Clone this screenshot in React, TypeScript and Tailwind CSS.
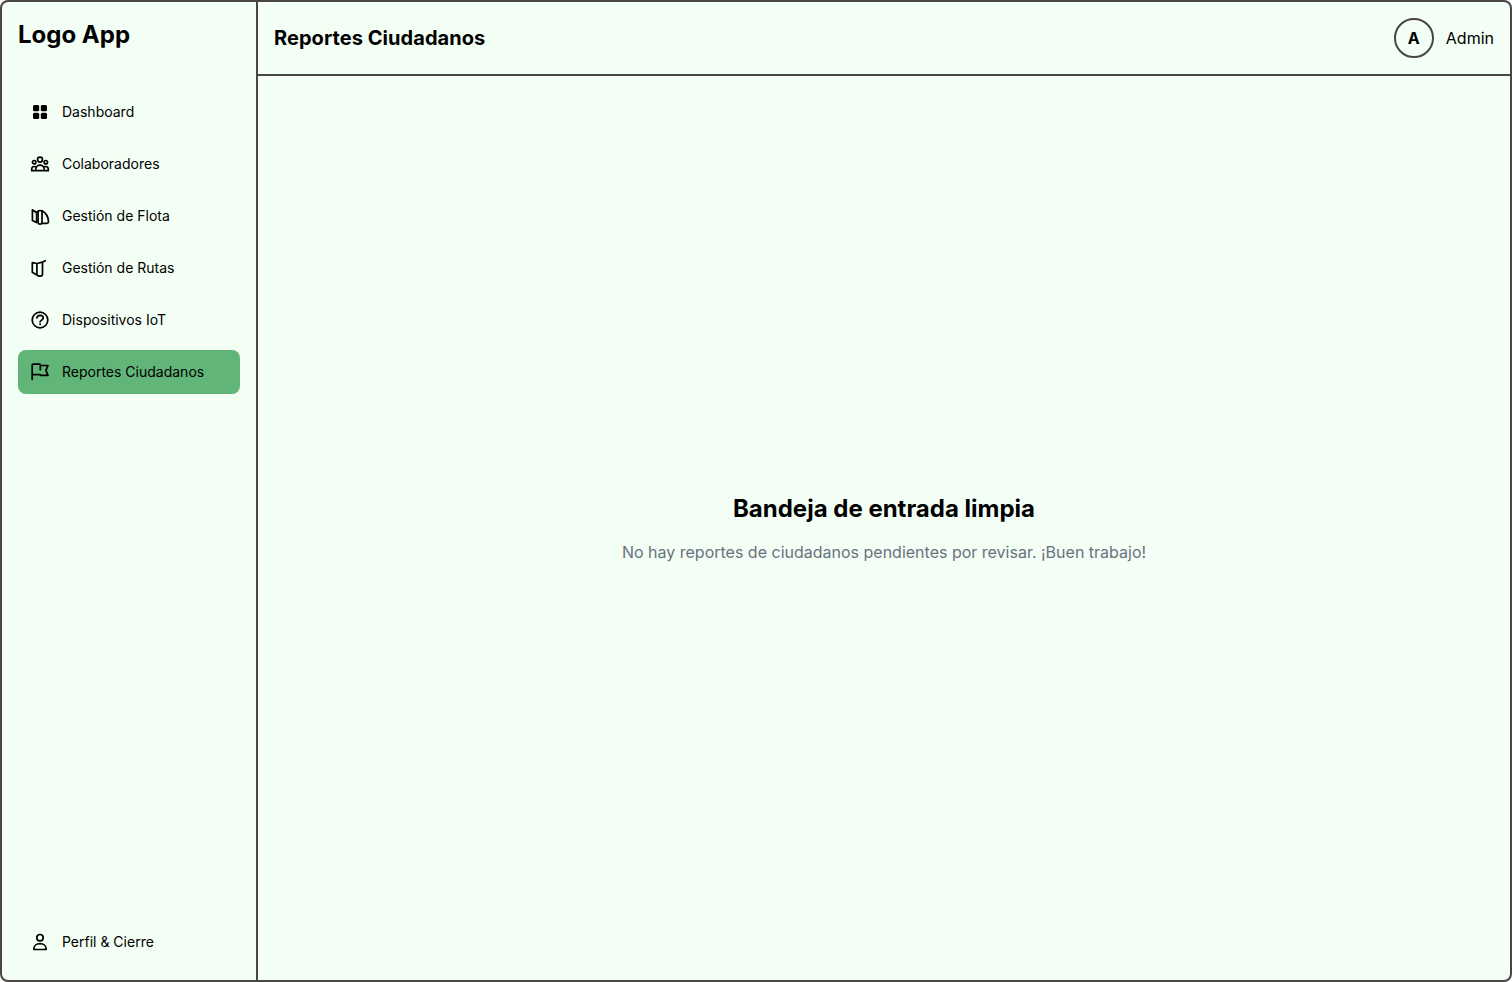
import React from "react";

type Item = { label: string; icon: React.ReactNode };

function Icon({ children }: { children: React.ReactNode }) {
  return (
    <svg
      width="20"
      height="20"
      viewBox="0 0 20 20"
      fill="none"
      stroke="#000"
      strokeWidth="1.7"
      strokeLinecap="round"
      strokeLinejoin="round"
      className="shrink-0"
    >
      {children}
    </svg>
  );
}

const items: Item[] = [
  {
    label: "Dashboard",
    icon: (
      <Icon>
        <g fill="#000" stroke="none">
          <rect x="3" y="3" width="6.200" height="6.200" rx="1.5" />
          <rect x="10.800" y="3" width="6.200" height="6.200" rx="1.5" />
          <rect x="3" y="10.800" width="6.200" height="6.200" rx="1.5" />
          <rect x="10.800" y="10.800" width="6.200" height="6.200" rx="1.5" />
        </g>
      </Icon>
    ),
  },
  {
    label: "Colaboradores",
    icon: (
      <Icon>
        <circle cx="10" cy="5.6" r="2.5" />
        <circle cx="4.2" cy="8.2" r="1.7" />
        <circle cx="15.8" cy="8.2" r="1.7" />
        <path d="M5.8 16.7v-1.400a4.2 4.2 0 0 1 8.400 0v1.400zM5.800 16.700H1.700v-1.500c0-1.600 1.100-2.700 2.500-2.700.9 0 1.500.3 2 .9M14.200 16.700h4.100v-1.500c0-1.600-1.100-2.700-2.500-2.700-.9 0-1.500.3-2 .9" />
      </Icon>
    ),
  },
  {
    label: "Gestión de Flota",
    icon: (
      <Icon>
        <path d="M2.400 3.800v10.700l4.200 2.100V6.800L2.400 3.800M6.600 6.600l2-1.800M12 4.700c3.200 1.700 6.200 5.900 6.500 10.700.1 1.200-.4 1.900-1.600 1.900H12" />
        <rect x="8.100" y="4.500" width="3.900" height="13.700" rx="1.600" />
      </Icon>
    ),
  },
  {
    label: "Gestión de Rutas",
    icon: (
      <Icon>
        <path d="M6.900 5.500L2.300 4.700v9.600l4.600 2.800V5.500l5.500-1.300 2.900-1.500M6.900 17.100l1.700 1h1.800c1.300 0 2.100-.8 2.100-2.200V4.300" />
      </Icon>
    ),
  },
  {
    label: "Dispositivos IoT",
    icon: (
      <Icon>
        <circle cx="10" cy="10" r="7.800" />
        <path d="M6.900 7.800c.3-1.500 1.500-2.400 3.200-2.400 1.900 0 3.200 1.100 3.200 2.700 0 2-3.200 2.100-3.200 3.700" />
        <circle cx="10.100" cy="14.300" r="1" fill="#000" stroke="none" />
      </Icon>
    ),
  },
  {
    label: "Reportes Ciudadanos",
    icon: (
      <Icon>
        <path d="M2.200 17.500V3c0-.5.3-.8.8-.8h6.500c.5 0 .8.3.8.8v4.700M10.300 3.500H18l-2.100 4.900 2.100 4.900h-7.200l-.7-.7H2.200" />
      </Icon>
    ),
  },
];

function NavItem({ item, active = false }: { item: Item; active?: boolean }) {
  return (
    <a
      className={
        active
          ? "flex h-11 items-center gap-3 rounded-lg bg-[#62b578] px-3 text-sm"
          : "flex h-11 items-center gap-3 rounded-lg px-3 text-sm"
      }
    >
      {item.icon}
      <span>{item.label}</span>
    </a>
  );
}

export default function App() {
  return (
    <div className="flex h-screen overflow-hidden rounded-lg border-2 border-[#4a4545] bg-[#f3fef4] font-['Inter',sans-serif] text-black antialiased">
      <aside className="flex w-64 shrink-0 flex-col border-r-2 border-[#4a4545] p-4">
        <h1 className="pt-px text-2xl font-bold">Logo App</h1>
        <nav className="mt-[39px] flex flex-col gap-2">
          {items.map((item) => (
            <NavItem key={item.label} item={item} active={item.label === "Reportes Ciudadanos"} />
          ))}
        </nav>
        <div className="mt-auto">
          <NavItem
            item={{
              label: "Perfil & Cierre",
              icon: (
                <Icon>
                  <circle cx="10" cy="5.700" r="3.200" />
                  <path d="M3.900 17.500v-.8c0-3 2.600-5 6.100-5s6.100 2 6.100 5v.8z" />
                </Icon>
              ),
            }}
          />
        </div>
      </aside>
      <div className="flex flex-1 flex-col">
        <header className="flex h-[74px] shrink-0 items-center justify-between border-b-2 border-[#4a4545] px-4">
          <h2 className="text-xl font-bold tracking-[0.06px]">Reportes Ciudadanos</h2>
          <div className="flex items-center gap-3">
            <div className="flex size-10 items-center justify-center rounded-full border-2 border-[#4a4545] font-bold">A</div>
            <span>Admin</span>
          </div>
        </header>
        <main className="flex flex-1 flex-col items-center justify-center gap-[15px] pt-px">
          <h3 className="text-2xl font-bold">Bandeja de entrada limpia</h3>
          <p className="text-[#6b7280]">No hay reportes de ciudadanos pendientes por revisar. ¡Buen trabajo!</p>
        </main>
      </div>
    </div>
  );
}
